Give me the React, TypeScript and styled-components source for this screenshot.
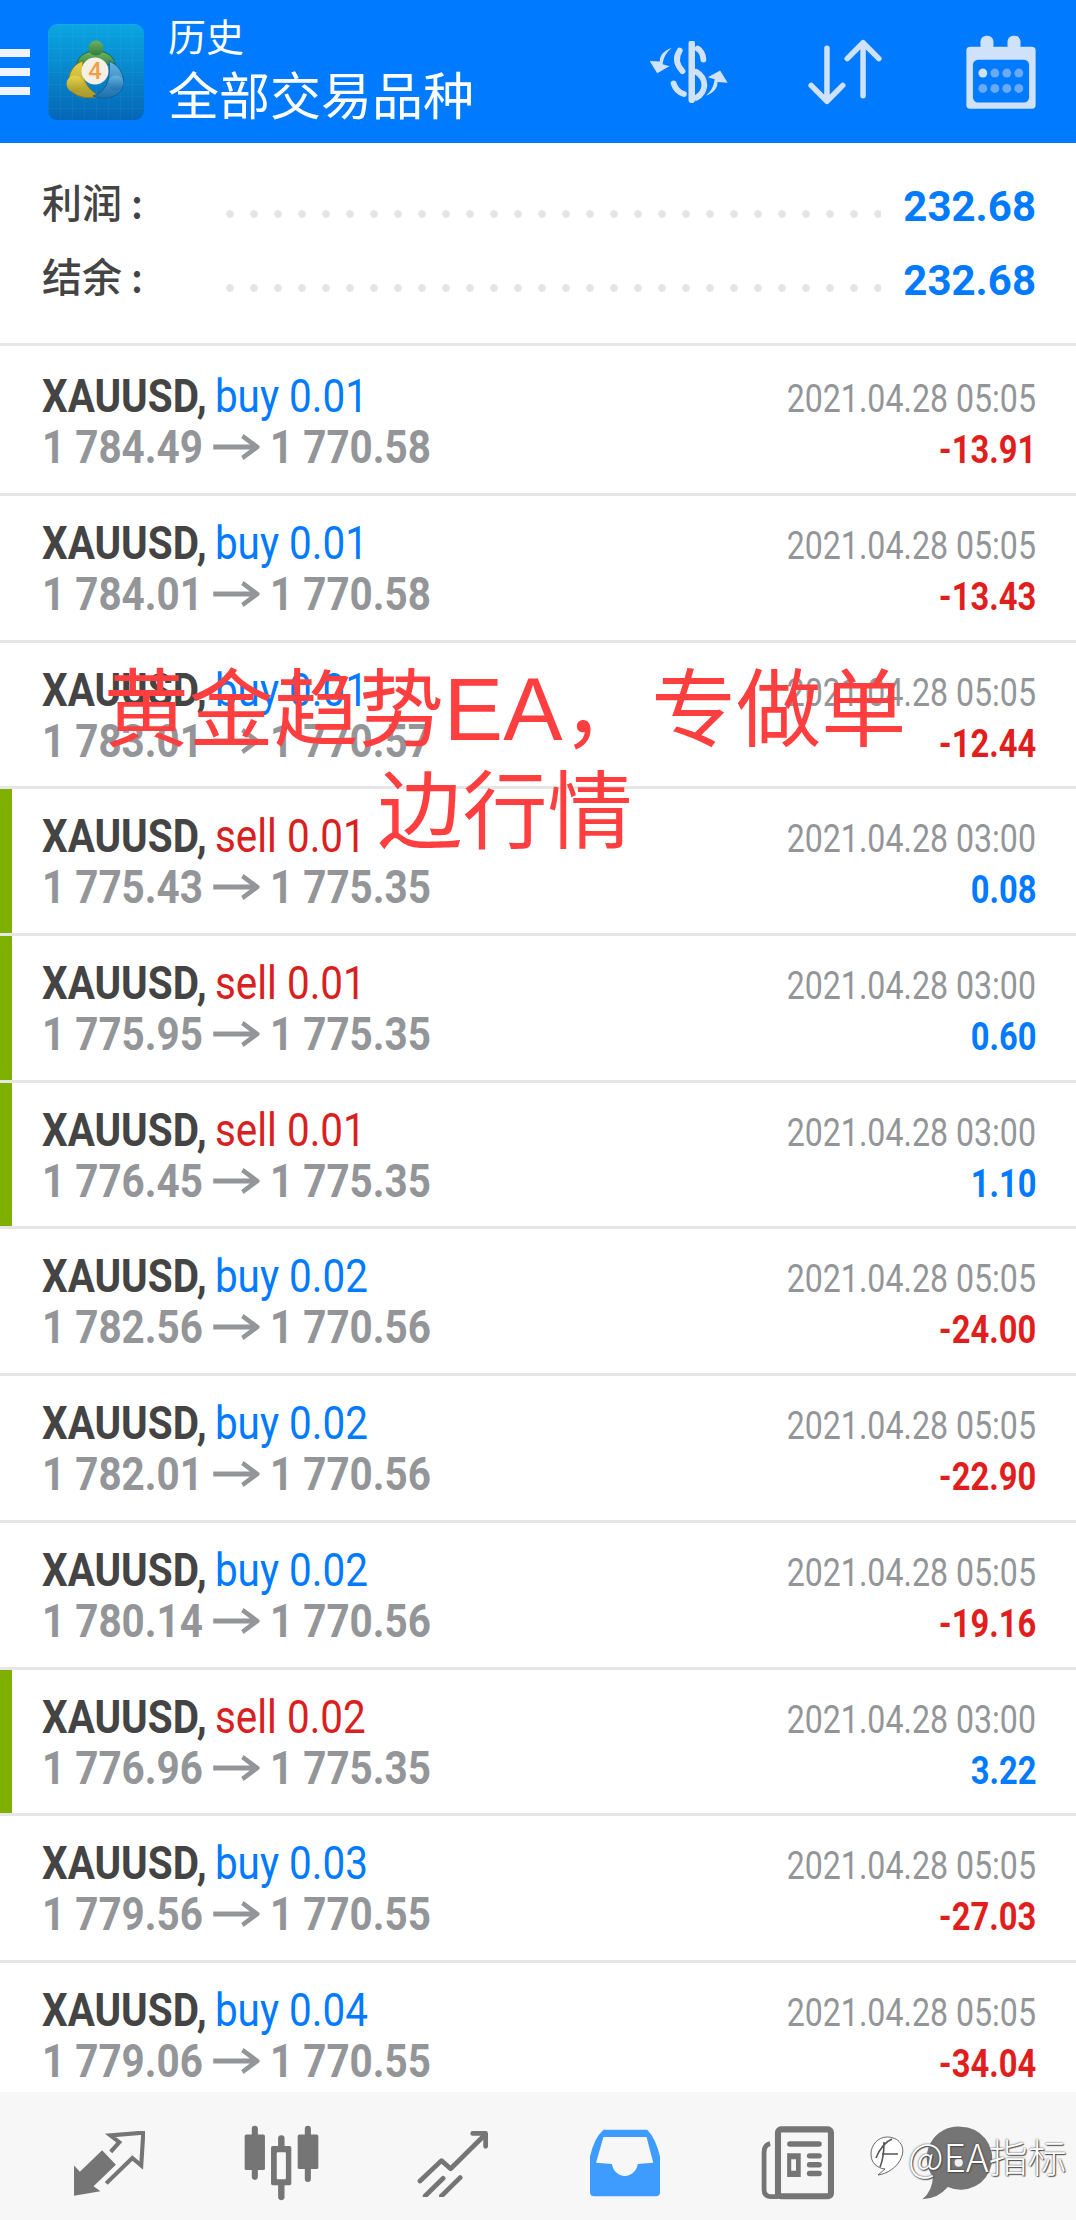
import * as React from 'react'
import styled, { createGlobalStyle } from 'styled-components'

const trades = [
  { open: '1 784.49', close: '1 770.58', side: 'buy', lot: '0.01', time: '05:05', profit: '-13.91' },
  { open: '1 784.01', close: '1 770.58', side: 'buy', lot: '0.01', time: '05:05', profit: '-13.43' },
  { open: '1 783.01', close: '1 770.57', side: 'buy', lot: '0.01', time: '05:05', profit: '-12.44' },
  { open: '1 775.43', close: '1 775.35', side: 'sell', lot: '0.01', time: '03:00', profit: '0.08' },
  { open: '1 775.95', close: '1 775.35', side: 'sell', lot: '0.01', time: '03:00', profit: '0.60' },
  { open: '1 776.45', close: '1 775.35', side: 'sell', lot: '0.01', time: '03:00', profit: '1.10' },
  { open: '1 782.56', close: '1 770.56', side: 'buy', lot: '0.02', time: '05:05', profit: '-24.00' },
  { open: '1 782.01', close: '1 770.56', side: 'buy', lot: '0.02', time: '05:05', profit: '-22.90' },
  { open: '1 780.14', close: '1 770.56', side: 'buy', lot: '0.02', time: '05:05', profit: '-19.16' },
  { open: '1 776.96', close: '1 775.35', side: 'sell', lot: '0.02', time: '03:00', profit: '3.22' },
  { open: '1 779.56', close: '1 770.55', side: 'buy', lot: '0.03', time: '05:05', profit: '-27.03' },
  { open: '1 779.06', close: '1 770.55', side: 'buy', lot: '0.04', time: '05:05', profit: '-34.04' }
]

const BLUE = '#007aff'
const RED = '#e01e1e'
const GRAY = '#939598'
const ICON = '#cfe2fa'
const NAV = '#757575'

const App = () => (
  <Page>
    <GlobalStyle />
    <TopBar>
      <Burger>
        <i />
        <i />
        <i />
      </Burger>
      <Logo />
      <TitleBlock>
        <SmallTitle>历史</SmallTitle>
        <BigTitle>全部交易品种</BigTitle>
      </TitleBlock>
      <TopActions>
        <DollarIcon />
        <SortIcon />
        <CalendarIcon />
      </TopActions>
    </TopBar>
    <Summary>
      <SummaryRow>
        <SummaryLabel>利润<Colon>:</Colon></SummaryLabel>
        <Dots />
        <SummaryValue>232.68</SummaryValue>
      </SummaryRow>
      <SummaryRow>
        <SummaryLabel>结余<Colon>:</Colon></SummaryLabel>
        <Dots />
        <SummaryValue>232.68</SummaryValue>
      </SummaryRow>
    </Summary>
    <List>
      {trades.map((trade, i) => (
        <TradeRow key={i} $first={i === 0}>
          <RowBody $closed={trade.side === 'sell'} $first={i === 0}>
            <Left>
              <TitleLine>
                <Symbol>XAUUSD,</Symbol> <Side $sell={trade.side === 'sell'}>{trade.side} {trade.lot}</Side>
              </TitleLine>
              <PriceLine>
                {trade.open}
                <ArrowIcon />
                {trade.close}
              </PriceLine>
            </Left>
            <Right>
              <DateLine>2021.04.28 {trade.time}</DateLine>
              <Profit $loss={trade.profit.startsWith('-')}>{trade.profit}</Profit>
            </Right>
          </RowBody>
        </TradeRow>
      ))}
    </List>
    <BottomNav>
      <NavSlot><QuotesIcon /></NavSlot>
      <NavSlot><CandlesIcon /></NavSlot>
      <NavSlot><TrendIcon /></NavSlot>
      <NavSlot><InboxIcon /></NavSlot>
      <NavSlot><NewsIcon /></NavSlot>
      <NavSlot><ChatIcon /></NavSlot>
    </BottomNav>
    <Caption>
      黄金趋势<CaptionLatin>EA</CaptionLatin>， 专做单
      <br />
      边行情
    </Caption>
    <Watermark>
      <SwirlIcon />
      <span>@EA指标</span>
    </Watermark>
  </Page>
)

const Logo = () => (
  <svg width="96" height="96" viewBox="0 0 96 96" style={{ flex: 'none' }}>
    <defs>
      <linearGradient id="logoBg" x1="0" y1="0" x2="0" y2="1">
        <stop offset="0" stopColor="#0aa6e2" />
        <stop offset="1" stopColor="#0566b6" />
      </linearGradient>
      <pattern id="logoGrid" width="12" height="12" patternUnits="userSpaceOnUse">
        <path d="M12 0H0V12" fill="none" stroke="#ffffff" strokeOpacity="0.07" />
      </pattern>
      <linearGradient id="logoYellow" x1="0" y1="0" x2="0" y2="1">
        <stop offset="0" stopColor="#e8d44a" />
        <stop offset="1" stopColor="#a8982a" />
      </linearGradient>
      <linearGradient id="logoGreen" x1="0" y1="0" x2="0" y2="1">
        <stop offset="0" stopColor="#6fb263" />
        <stop offset="1" stopColor="#2f7d3c" />
      </linearGradient>
      <linearGradient id="logoSky" x1="0" y1="0" x2="0" y2="1">
        <stop offset="0" stopColor="#66b5e0" />
        <stop offset="1" stopColor="#1f6fae" />
      </linearGradient>
    </defs>
    <rect width="96" height="96" rx="9" fill="url(#logoBg)" />
    <rect width="96" height="96" rx="9" fill="url(#logoGrid)" />
    <path d="M29 46C27 33 37 27 48 27C59 27 69 33 67 46C61 36 35 36 29 46Z" fill="url(#logoGreen)" stroke="#1c6a44" strokeWidth="1" />
    <circle cx="48" cy="24" r="7.5" fill="url(#logoGreen)" />
    <path d="M35 37C23 41 18 54 22 66C30 75 44 75 53 72C42 68 33 58 35 37Z" fill="url(#logoYellow)" stroke="#7d7a2a" strokeWidth="1" />
    <circle cx="27" cy="60" r="8.5" fill="url(#logoYellow)" />
    <path d="M61 37C76 43 79 60 72 68C63 76 53 75 45 72C58 68 63 56 61 37Z" fill="url(#logoSky)" stroke="#135d9a" strokeWidth="1" />
    <circle cx="68" cy="59" r="7.5" fill="url(#logoSky)" />
    <circle cx="47" cy="47" r="13.5" fill="#f6efe6" />
    <LogoFour x="47" y="55">4</LogoFour>
  </svg>
)

const DollarIcon = () => (
  <DollarSvg width="78" height="62" viewBox="325 118 228 181">
    <g fill="none" stroke={ICON} strokeWidth="17" strokeLinecap="round">
      <path d="M447 125V290" strokeWidth="19" />
      <path d="M464 140Q480 150 481 172" />
      <path d="M412 146Q392 176 420 206" />
      <path d="M460 208Q484 222 484 248Q482 272 460 284" />
      <path d="M394 242Q402 266 424 273" />
    </g>
    <path d="M388 138C362 146 352 165 354 178L324 176L346 212L382 192L362 186C364 168 372 150 388 138Z" fill={ICON} />
    <path d="M388 138C362 146 352 165 354 178L324 176L346 212L382 192L362 186C364 168 372 150 388 138Z" fill={ICON} transform="rotate(180 438 208)" />
  </DollarSvg>
)

const SortIcon = () => (
  <svg width="74" height="66" viewBox="785 115 215 192">
    <g fill="none" stroke={ICON} strokeWidth="16" strokeLinecap="round" strokeLinejoin="round">
      <path d="M840 142V296M794 250L840 296L886 250" />
      <path d="M945 280V126M899 172L945 126L991 172" />
    </g>
  </svg>
)

const CalendarIcon = () => (
  <svg width="70" height="74" viewBox="1247 100 202 216">
    <rect x="1247" y="134" width="202" height="181" rx="11" fill={ICON} />
    <rect x="1266" y="172" width="164" height="125" rx="15" fill={BLUE} />
    <rect x="1288" y="102" width="38" height="46" rx="17" fill={ICON} />
    <rect x="1367" y="102" width="38" height="46" rx="17" fill={ICON} />
    {[1295, 1330, 1365, 1400].map((x, i) => (
      <React.Fragment key={x}>
        <circle cx={x} cy="211" r="13" fill={i === 0 ? ICON : '#6aa9f4'} />
        <circle cx={x} cy="256" r="13" fill="#6aa9f4" />
      </React.Fragment>
    ))}
  </svg>
)

const ArrowIcon = () => (
  <ArrowSvg viewBox="0 0 54 30">
    <path d="M0 15H51M34 4L51 15L34 26" fill="none" stroke={GRAY} strokeWidth="5" />
  </ArrowSvg>
)

const QuotesIcon = () => (
  <svg width="72" height="65" viewBox="215 280 210 188">
    <path d="M218 380L235 398L300 335L340 378L275 440L295 455L218 468Z" fill={NAV} />
    <path d="M325 340L350 312L324 292L420 284L414 380L388 358L312 432" fill="none" stroke={NAV} strokeWidth="12" />
  </svg>
)

const CandlesIcon = () => (
  <svg width="75" height="76" viewBox="708 260 222 224">
    <g fill={NAV}>
      <rect x="731" y="262" width="18" height="160" rx="9" />
      <rect x="710" y="288" width="60" height="105" rx="5" />
      <rect x="809" y="290" width="19" height="192" rx="9" />
      <rect x="788" y="322" width="60" height="116" rx="5" />
      <rect x="888" y="262" width="18" height="166" rx="9" />
      <rect x="867" y="288" width="61" height="102" rx="5" />
    </g>
    <rect x="805" y="340" width="27" height="80" rx="3" fill="#f7f7f7" />
  </svg>
)

const TrendIcon = () => (
  <svg width="72" height="68" viewBox="1214 265 210 200">
    <g fill="none" stroke={NAV} strokeWidth="14" strokeLinecap="round" strokeLinejoin="round">
      <path d="M1222 418L1285 358L1312 382L1410 285" />
      <path d="M1377 278H1415V316" />
      <path d="M1237 462L1290 410M1285 462L1340 408" />
    </g>
  </svg>
)

const InboxIcon = () => (
  <svg width="72" height="68" viewBox="148 268 212 202">
    <path d="M150 455V350Q162 295 190 270H320Q345 295 358 350V455Q358 468 345 468H163Q150 468 150 455Z" fill="#3e9bff" />
    <path d="M190 292H318L338 368L292 372A39 42 0 0 1 215 372L168 368Z" fill="#f7f7f7" />
  </svg>
)

const NewsIcon = () => (
  <svg width="76" height="74" viewBox="648 260 222 218">
    <g fill="none" stroke={NAV}>
      <rect x="703" y="270" width="156" height="197" rx="9" strokeWidth="18" />
      <path d="M680 312Q662 316 662 338V448Q662 468 682 468H705" strokeWidth="14" />
    </g>
    <rect x="730" y="305" width="102" height="16" rx="8" fill={NAV} />
    <path d="M730 340H770V410H730ZM742 358V392H756V358Z" fill={NAV} fillRule="evenodd" />
    <rect x="788" y="340" width="44" height="16" rx="8" fill={NAV} />
    <rect x="788" y="366" width="44" height="16" rx="8" fill={NAV} />
    <rect x="788" y="392" width="44" height="16" rx="8" fill={NAV} />
  </svg>
)

const ChatIcon = () => (
  <svg width="72" height="74" viewBox="1112 260 210 218">
    <path d="M1228 262A93 93 0 1 1 1190 440Q1160 475 1115 476Q1145 450 1146 410A93 93 0 0 1 1228 262Z" fill={NAV} />
    <circle cx="1222" cy="368" r="12" fill="#f0f0f0" />
  </svg>
)

const SwirlIcon = () => (
  <svg width="38" height="42" viewBox="0 0 38 42">
    <path d="M19 3C10 3 3 11 3 20S9 34 17 35L10 41C18 40 30 34 34 22C37 12 31 3 19 3Z" fill="#ffffff" stroke="#444444" strokeWidth="0.8" />
    <path d="M8 24C12 14 17 8 24 5M14 20H30M16 8C16 18 15 26 12 33" fill="none" stroke="#555555" strokeWidth="1.6" />
  </svg>
)

const GlobalStyle = createGlobalStyle`
  body {
    margin: 0;
    background: #ffffff;
  }
`

const Page = styled.div`
  position: relative;
  display: flex;
  flex-direction: column;
  width: 1076px;
  height: 2220px;
  overflow: hidden;
  background: #ffffff;
  font-family: Roboto, "Noto Sans CJK SC", sans-serif;
`

const TopBar = styled.header`
  display: flex;
  align-items: center;
  flex: none;
  height: 143px;
  padding-right: 40px;
  box-sizing: border-box;
  background: ${BLUE};
  color: #ffffff;
`

const Burger = styled.div`
  display: flex;
  flex-direction: column;
  gap: 11px;
  width: 30px;
  margin-right: 18px;
  i {
    display: block;
    height: 8px;
    background: #eef5ff;
  }
`

const TitleBlock = styled.div`
  display: flex;
  flex-direction: column;
  margin: -2px 0 0 24px;
  font-family: "Noto Sans CJK SC", sans-serif;
`

const SmallTitle = styled.div`
  font-size: 38px;
  line-height: 44px;
`

const BigTitle = styled.div`
  font-size: 51px;
  line-height: 72px;
`

const TopActions = styled.div`
  display: flex;
  align-items: center;
  gap: 84px;
  margin-left: auto;
`

const DollarSvg = styled.svg`
  margin-right: -4px;
`

const LogoFour = styled.text`
  font-family: Roboto, sans-serif;
  font-size: 24px;
  font-weight: 500;
  text-anchor: middle;
  fill: #f0a044;
`

const Summary = styled.section`
  flex: none;
  height: 203px;
  box-sizing: border-box;
  padding: 26px 40px 0 42px;
  border-bottom: 3px solid #e6e6e6;
`

const SummaryRow = styled.div`
  display: flex;
  align-items: center;
  height: 74px;
`

const SummaryLabel = styled.div`
  width: 184px;
  margin-top: -10px;
  color: #444444;
  font-family: "Noto Sans CJK SC", sans-serif;
  font-size: 40px;
  font-weight: 500;
`

const Colon = styled.span`
  margin-left: 9px;
`

const Dots = styled.div`
  flex: 1;
  height: 8px;
  margin-top: 16px;
  background-image: radial-gradient(circle, #e4e4e4 3.5px, transparent 4px);
  background-size: 24px 8px;
  background-position: -8px center;
`

const SummaryValue = styled.div`
  margin-left: 22px;
  color: ${BLUE};
  font-size: 42px;
  font-weight: 700;
`

const List = styled.div`
  flex: 1;
  min-height: 0;
  overflow: hidden;
`

const TradeRow = styled.div<{ $first: boolean }>`
  height: ${p => (p.$first ? 150 : 146.7)}px;
  box-sizing: border-box;
  border-bottom: 3px solid #e6e6e6;
`

const RowBody = styled.div<{ $closed: boolean; $first: boolean }>`
  display: flex;
  justify-content: space-between;
  height: 100%;
  box-sizing: border-box;
  padding: ${p => (p.$first ? 24 : 21)}px 40px 0 ${p => (p.$closed ? 30 : 42)}px;
  border-left: ${p => (p.$closed ? '12px solid #7fb000' : 'none')};
`

const Left = styled.div`
  display: flex;
  flex-direction: column;
`

const TitleLine = styled.div`
  width: 460px;
  font-size: 47px;
  line-height: 52px;
  white-space: nowrap;
  transform: scaleX(0.86);
  transform-origin: left center;
`

const Symbol = styled.span`
  margin-right: -2px;
  color: #444444;
  font-weight: 700;
`

const Side = styled.span<{ $sell: boolean }>`
  color: ${p => (p.$sell ? '#d92020' : BLUE)};
`

const PriceLine = styled.div`
  display: flex;
  align-items: center;
  width: 480px;
  color: ${GRAY};
  font-size: 47px;
  font-weight: 700;
  line-height: 50px;
  white-space: pre;
  transform: scaleX(0.86);
  transform-origin: left center;
`

const ArrowSvg = styled.svg`
  width: 54px;
  height: 30px;
  margin: 0 12px;
`

const Right = styled.div`
  display: flex;
  flex-direction: column;
  align-items: flex-end;
  padding-top: 6px;
`

const DateLine = styled.div`
  color: ${GRAY};
  font-size: 38px;
  line-height: 46px;
  white-space: nowrap;
  transform: scaleX(0.845);
  transform-origin: right center;
`

const Profit = styled.div<{ $loss: boolean }>`
  margin-top: 2px;
  color: ${p => (p.$loss ? RED : BLUE)};
  font-size: 38px;
  font-weight: 700;
  line-height: 52px;
  white-space: nowrap;
  transform: scaleX(0.86);
  transform-origin: right center;
`

const BottomNav = styled.nav`
  display: flex;
  align-items: center;
  flex: none;
  height: 128px;
  padding: 14px 0 0 23px;
  box-sizing: border-box;
  background: #f7f7f7;
`

const NavSlot = styled.div`
  display: flex;
  justify-content: center;
  align-items: center;
  width: 172px;
  &:last-child {
    width: 148px;
  }
`

const Caption = styled.div`
  position: absolute;
  top: 658px;
  left: 85px;
  width: 840px;
  color: #ff3f3f;
  font-family: "Liberation Sans", "Noto Sans CJK SC", sans-serif;
  font-size: 85px;
  line-height: 102px;
  word-spacing: -20px;
  text-align: center;
  white-space: nowrap;
`

const CaptionLatin = styled.span`
  font-size: 89px;
`

const Watermark = styled.div`
  position: absolute;
  left: 868px;
  top: 2133px;
  display: flex;
  align-items: center;
  gap: 2px;
  color: #ffffff;
  font-family: "Noto Sans CJK SC", sans-serif;
  font-size: 39px;
  font-weight: 300;
  line-height: 44px;
  text-shadow: 0 0 2px #333333, 1px 1px 1px #555555;
  white-space: nowrap;
`

export default App
